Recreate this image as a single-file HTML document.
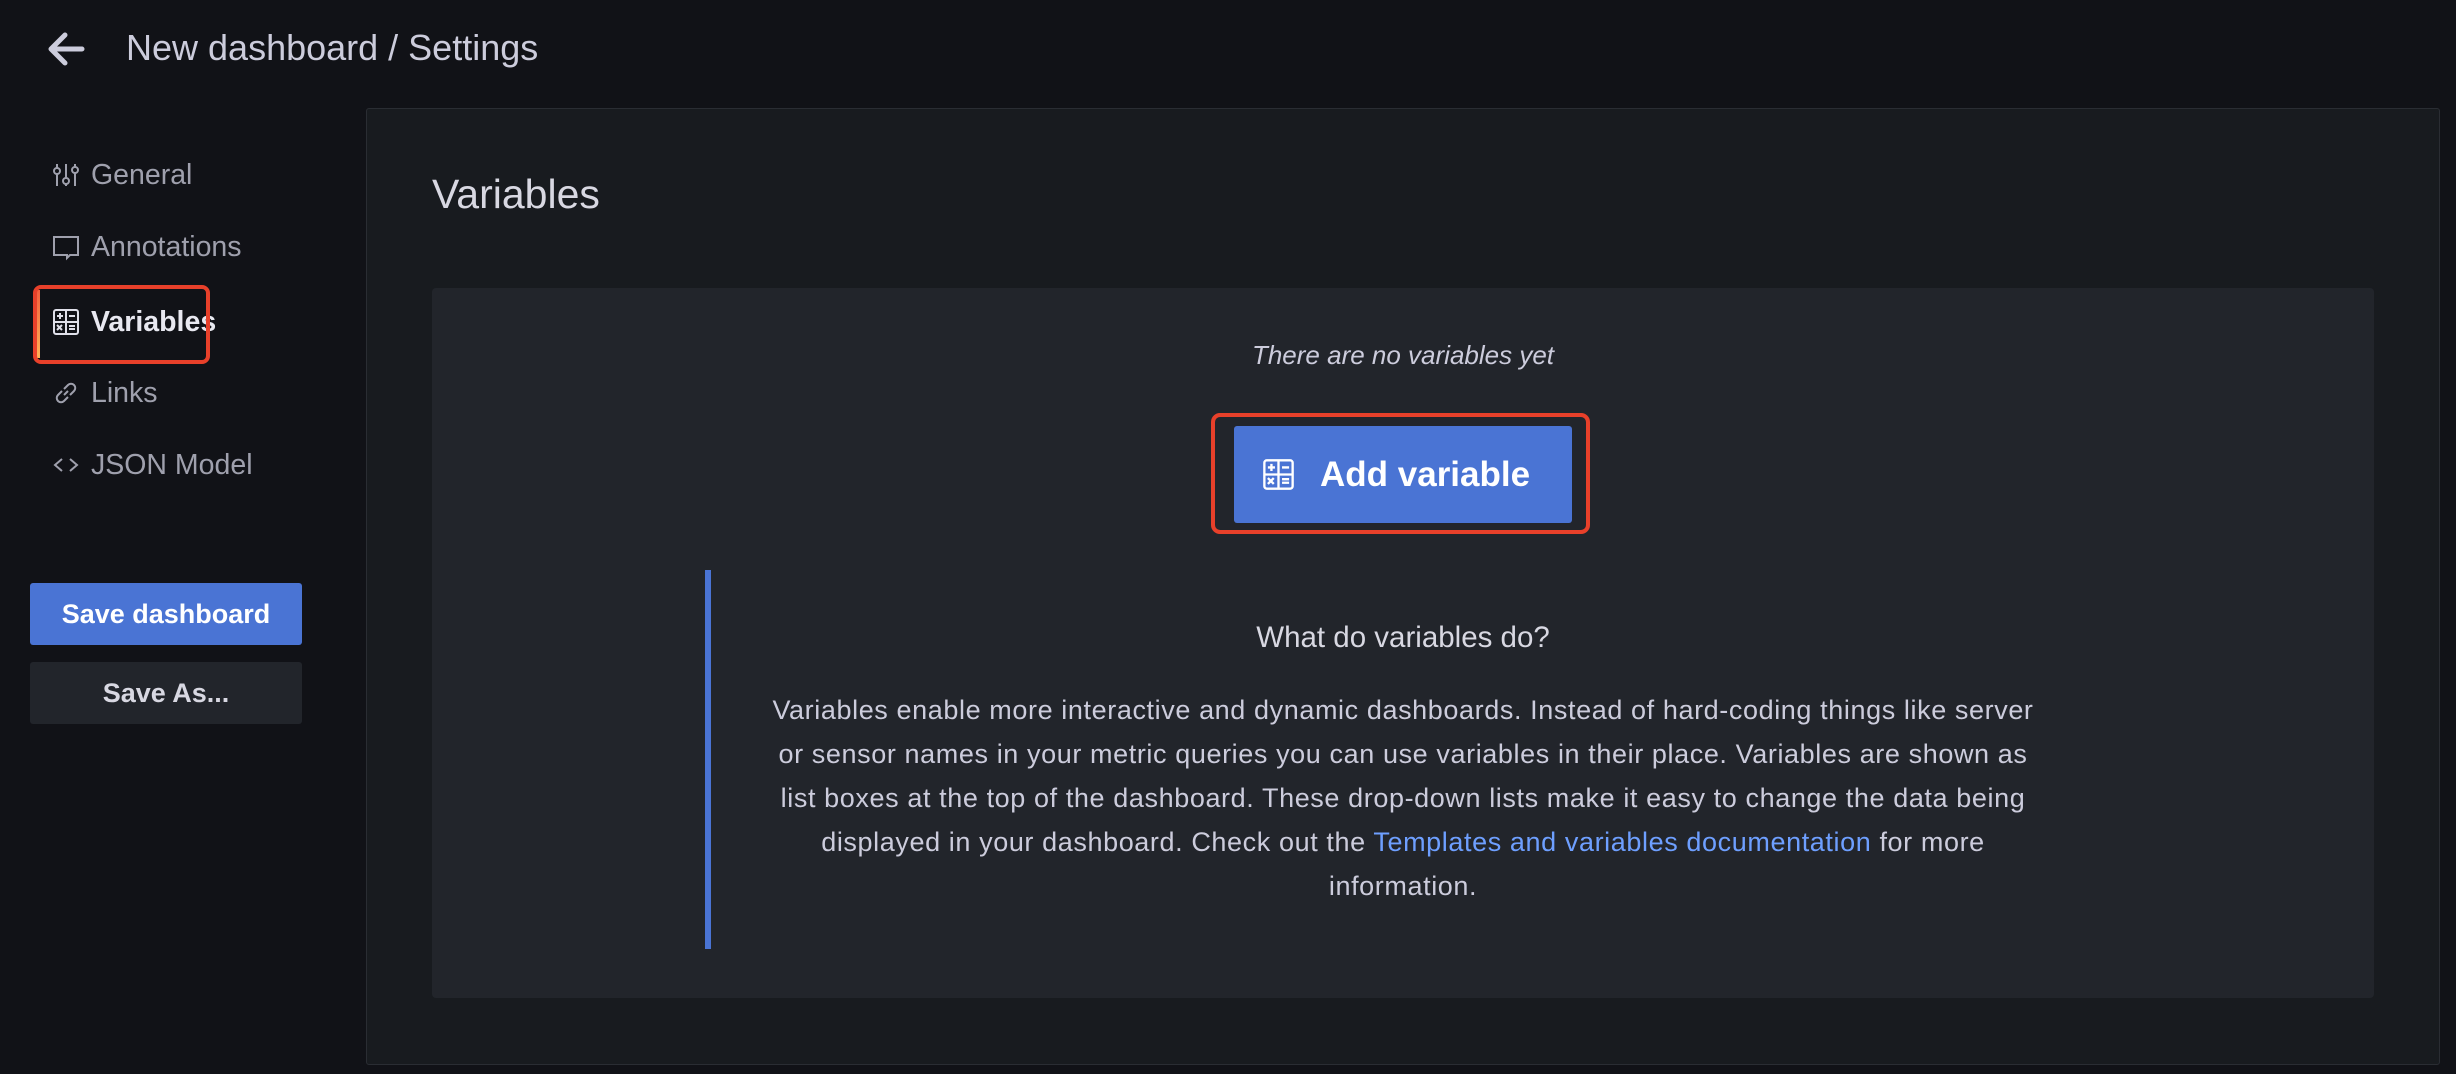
<!DOCTYPE html>
<html><head><meta charset="utf-8"><style>
*{box-sizing:border-box;margin:0;padding:0}
body{width:2456px;height:1074px;background:#111217;font-family:"Liberation Sans",sans-serif;color:#ccccdc;position:relative;overflow:hidden}
.a{position:absolute}
.nav{position:absolute;left:52px;font-size:28.5px;color:#9fa0ad;display:flex;align-items:center;height:40px}
.nav svg{width:28px;height:28px;margin-right:11px;fill:none;stroke:#9fa0ad;stroke-width:2}
.btn{position:absolute;left:30px;width:272px;height:62px;border-radius:3px;font-weight:bold;font-size:27px;color:#fff;display:flex;align-items:center;justify-content:center}
p.t{position:absolute;left:432px;width:1942px;text-align:center}
</style></head><body>
<svg class="a" style="left:46px;top:30px" width="40" height="38" viewBox="0 0 40 38"><path d="M36 19H6M19 5L5 19l14 14" stroke="#ccccdc" stroke-width="5" fill="none" stroke-linecap="round" stroke-linejoin="round"/></svg>
<div class="a" style="left:126px;top:27px;font-size:36px;color:#ccccdc">New dashboard / Settings</div>

<div class="nav" style="top:155px"><svg viewBox="0 0 28 28"><path d="M5 3v22M14 3v22M23 3v22"/><circle cx="5" cy="10" r="3" fill="#111217"/><circle cx="14" cy="20" r="3" fill="#111217"/><circle cx="23" cy="9" r="3" fill="#111217"/></svg>General</div>
<div class="nav" style="top:227px"><svg viewBox="0 0 28 28"><path d="M2 4h24v18H18l-3 3v-3H2z"/></svg>Annotations</div>
<div class="nav" style="top:302px;color:#e8e8f0;font-weight:bold"><svg viewBox="0 0 28 28" style="stroke:#e0e0ea"><rect x="2" y="2" width="24" height="24" rx="2"/><path d="M14 2v24M2 14h24M5 8h6M8 5v6M17 8h6M17 18h6M17 21h6M5 17l5 5M10 17l-5 5"/></svg>Variables</div>
<div class="a" style="left:37px;top:290px;width:3px;height:68px;background:linear-gradient(#f55f3e,#ffb357)"></div>
<div class="a" style="left:33px;top:285px;width:177px;height:79px;border:4px solid #e8402a;border-radius:8px"></div>
<div class="nav" style="top:373px"><svg viewBox="0 0 28 28"><path d="M12 16l4-4M10 12l-4 4a4 4 0 006 6l4-4M18 16l4-4a4 4 0 00-6-6l-4 4"/></svg>Links</div>
<div class="nav" style="top:445px"><svg viewBox="0 0 28 28"><path d="M10 8l-7 6 7 6M18 8l7 6-7 6"/></svg>JSON Model</div>

<div class="btn" style="top:583px;background:#4a74d4">Save dashboard</div>
<div class="btn" style="top:662px;background:#22252b;color:#d8d8e2">Save As...</div>

<div class="a" style="left:366px;top:108px;width:2074px;height:957px;background:#181b1f;border:1px solid #2a2d33;border-radius:3px"></div>
<div class="a" style="left:432px;top:171px;font-size:41px;color:#d8d8e2">Variables</div>
<div class="a" style="left:432px;top:288px;width:1942px;height:710px;background:#22252b;border-radius:4px"></div>
<p class="t" style="top:340px;font-size:26px;font-style:italic;color:#ccccdc">There are no variables yet</p>
<div class="a" style="left:1211px;top:413px;width:379px;height:121px;border:4px solid #e8402a;border-radius:9px"></div>
<div class="a" style="left:1234px;top:426px;width:338px;height:97px;background:#4a74d4;border-radius:3px;display:flex;align-items:center;color:#fff;font-weight:bold;font-size:35px">
<svg style="margin-left:28px;margin-right:25px" width="33" height="37" viewBox="0 0 28 28" fill="none" stroke="#fff" stroke-width="2"><rect x="2" y="2" width="24" height="24" rx="2"/><path d="M14 2v24M2 14h24M5 8h6M8 5v6M17 8h6M17 18h6M17 21h6M5 17l5 5M10 17l-5 5"/></svg>Add variable</div>

<div class="a" style="left:705px;top:570px;width:6px;height:379px;background:#4a74d4"></div>
<p class="t" style="top:621px;font-size:29.5px;color:#d8d8e2">What do variables do?</p>
<p class="t" style="top:688px;font-size:27px;letter-spacing:0.6px;line-height:44px;color:#ccccdc">Variables enable more interactive and dynamic dashboards. Instead of hard-coding things like server<br>or sensor names in your metric queries you can use variables in their place. Variables are shown as<br>list boxes at the top of the dashboard. These drop-down lists make it easy to change the data being<br>displayed in your dashboard. Check out the <span style="color:#6e9fff">Templates and variables documentation</span> for more<br>information.</p>
</body></html>
